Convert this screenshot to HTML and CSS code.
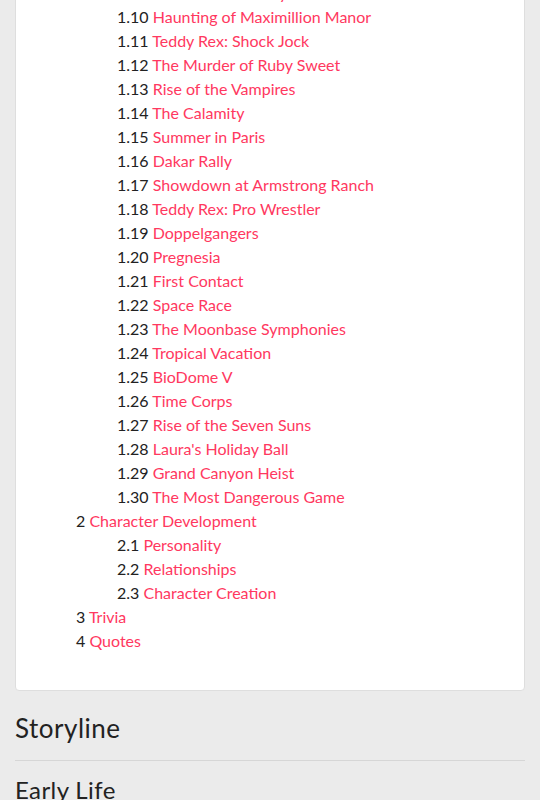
FILE: index.html
```html
<!DOCTYPE html>
<html lang="en">
<head>
<meta charset="utf-8">
<title>Contents</title>
<link rel="stylesheet" href="styles.css">
</head>
<body>
<div class="page">
  <div class="toc">
    <ul class="toc-list">
      <li>
        <ul class="toc-sub">
          <li><span class="num">1.9</span> <a href="#">The Haunted Library</a></li>
          <li><span class="num">1.10</span> <a href="#">Haunting of Maximillion Manor</a></li>
          <li><span class="num">1.11</span> <a href="#">Teddy Rex: Shock Jock</a></li>
          <li><span class="num">1.12</span> <a href="#">The Murder of Ruby Sweet</a></li>
          <li><span class="num">1.13</span> <a href="#">Rise of the Vampires</a></li>
          <li><span class="num">1.14</span> <a href="#">The Calamity</a></li>
          <li><span class="num">1.15</span> <a href="#">Summer in Paris</a></li>
          <li><span class="num">1.16</span> <a href="#">Dakar Rally</a></li>
          <li><span class="num">1.17</span> <a href="#">Showdown at Armstrong Ranch</a></li>
          <li><span class="num">1.18</span> <a href="#">Teddy Rex: Pro Wrestler</a></li>
          <li><span class="num">1.19</span> <a href="#">Doppelgangers</a></li>
          <li><span class="num">1.20</span> <a href="#">Pregnesia</a></li>
          <li><span class="num">1.21</span> <a href="#">First Contact</a></li>
          <li><span class="num">1.22</span> <a href="#">Space Race</a></li>
          <li><span class="num">1.23</span> <a href="#">The Moonbase Symphonies</a></li>
          <li><span class="num">1.24</span> <a href="#">Tropical Vacation</a></li>
          <li><span class="num">1.25</span> <a href="#">BioDome V</a></li>
          <li><span class="num">1.26</span> <a href="#">Time Corps</a></li>
          <li><span class="num">1.27</span> <a href="#">Rise of the Seven Suns</a></li>
          <li><span class="num">1.28</span> <a href="#">Laura's Holiday Ball</a></li>
          <li><span class="num">1.29</span> <a href="#">Grand Canyon Heist</a></li>
          <li><span class="num">1.30</span> <a href="#">The Most Dangerous Game</a></li>
        </ul>
      </li>
      <li><span class="num">2</span> <a href="#">Character Development</a>
        <ul class="toc-sub">
          <li><span class="num">2.1</span> <a href="#">Personality</a></li>
          <li><span class="num">2.2</span> <a href="#">Relationships</a></li>
          <li><span class="num">2.3</span> <a href="#">Character Creation</a></li>
        </ul>
      </li>
      <li><span class="num">3</span> <a href="#">Trivia</a></li>
      <li><span class="num">4</span> <a href="#">Quotes</a></li>
    </ul>
  </div>
  <h2 class="section-title">Storyline</h2>
  <h3 class="sub-title">Early Life</h3>
</div>
</body>
</html>
```
FILE: styles.css
```css
html, body {
  margin: 0;
  padding: 0;
}
body {
  background: #ebebeb;
  font-family: "Lato", "Noto Sans", sans-serif;
  font-size: 16px;
  line-height: 24px;
  color: #222;
  overflow: hidden;
}
.page {
  padding: 0 15px;
}
.toc {
  margin-top: -20px;
  background: #fff;
  border: 1px solid #dedede;
  border-radius: 4px;
  padding: 0 0 37px 0;
}
.toc ul {
  list-style: none;
  margin: 0;
}
.toc-list {
  padding: 0 0 0 60px;
}
.toc-sub {
  padding: 0 0 0 41px;
}
.toc a {
  color: #ff3860;
  text-decoration: none;
}
.num {
  color: #222;
}
.section-title {
  font-family: "Lato", sans-serif;
  font-weight: 400;
  font-size: 26px;
  line-height: 31px;
  letter-spacing: 0.5px;
  margin: 22px 0 0;
  padding-bottom: 16px;
  border-bottom: 1px solid #d6d6d6;
  color: #222;
}
.sub-title {
  font-family: "Lato", sans-serif;
  font-weight: 400;
  font-size: 24px;
  line-height: 29px;
  letter-spacing: 0.4px;
  margin: 14px 0 0;
  color: #222;
}
```
